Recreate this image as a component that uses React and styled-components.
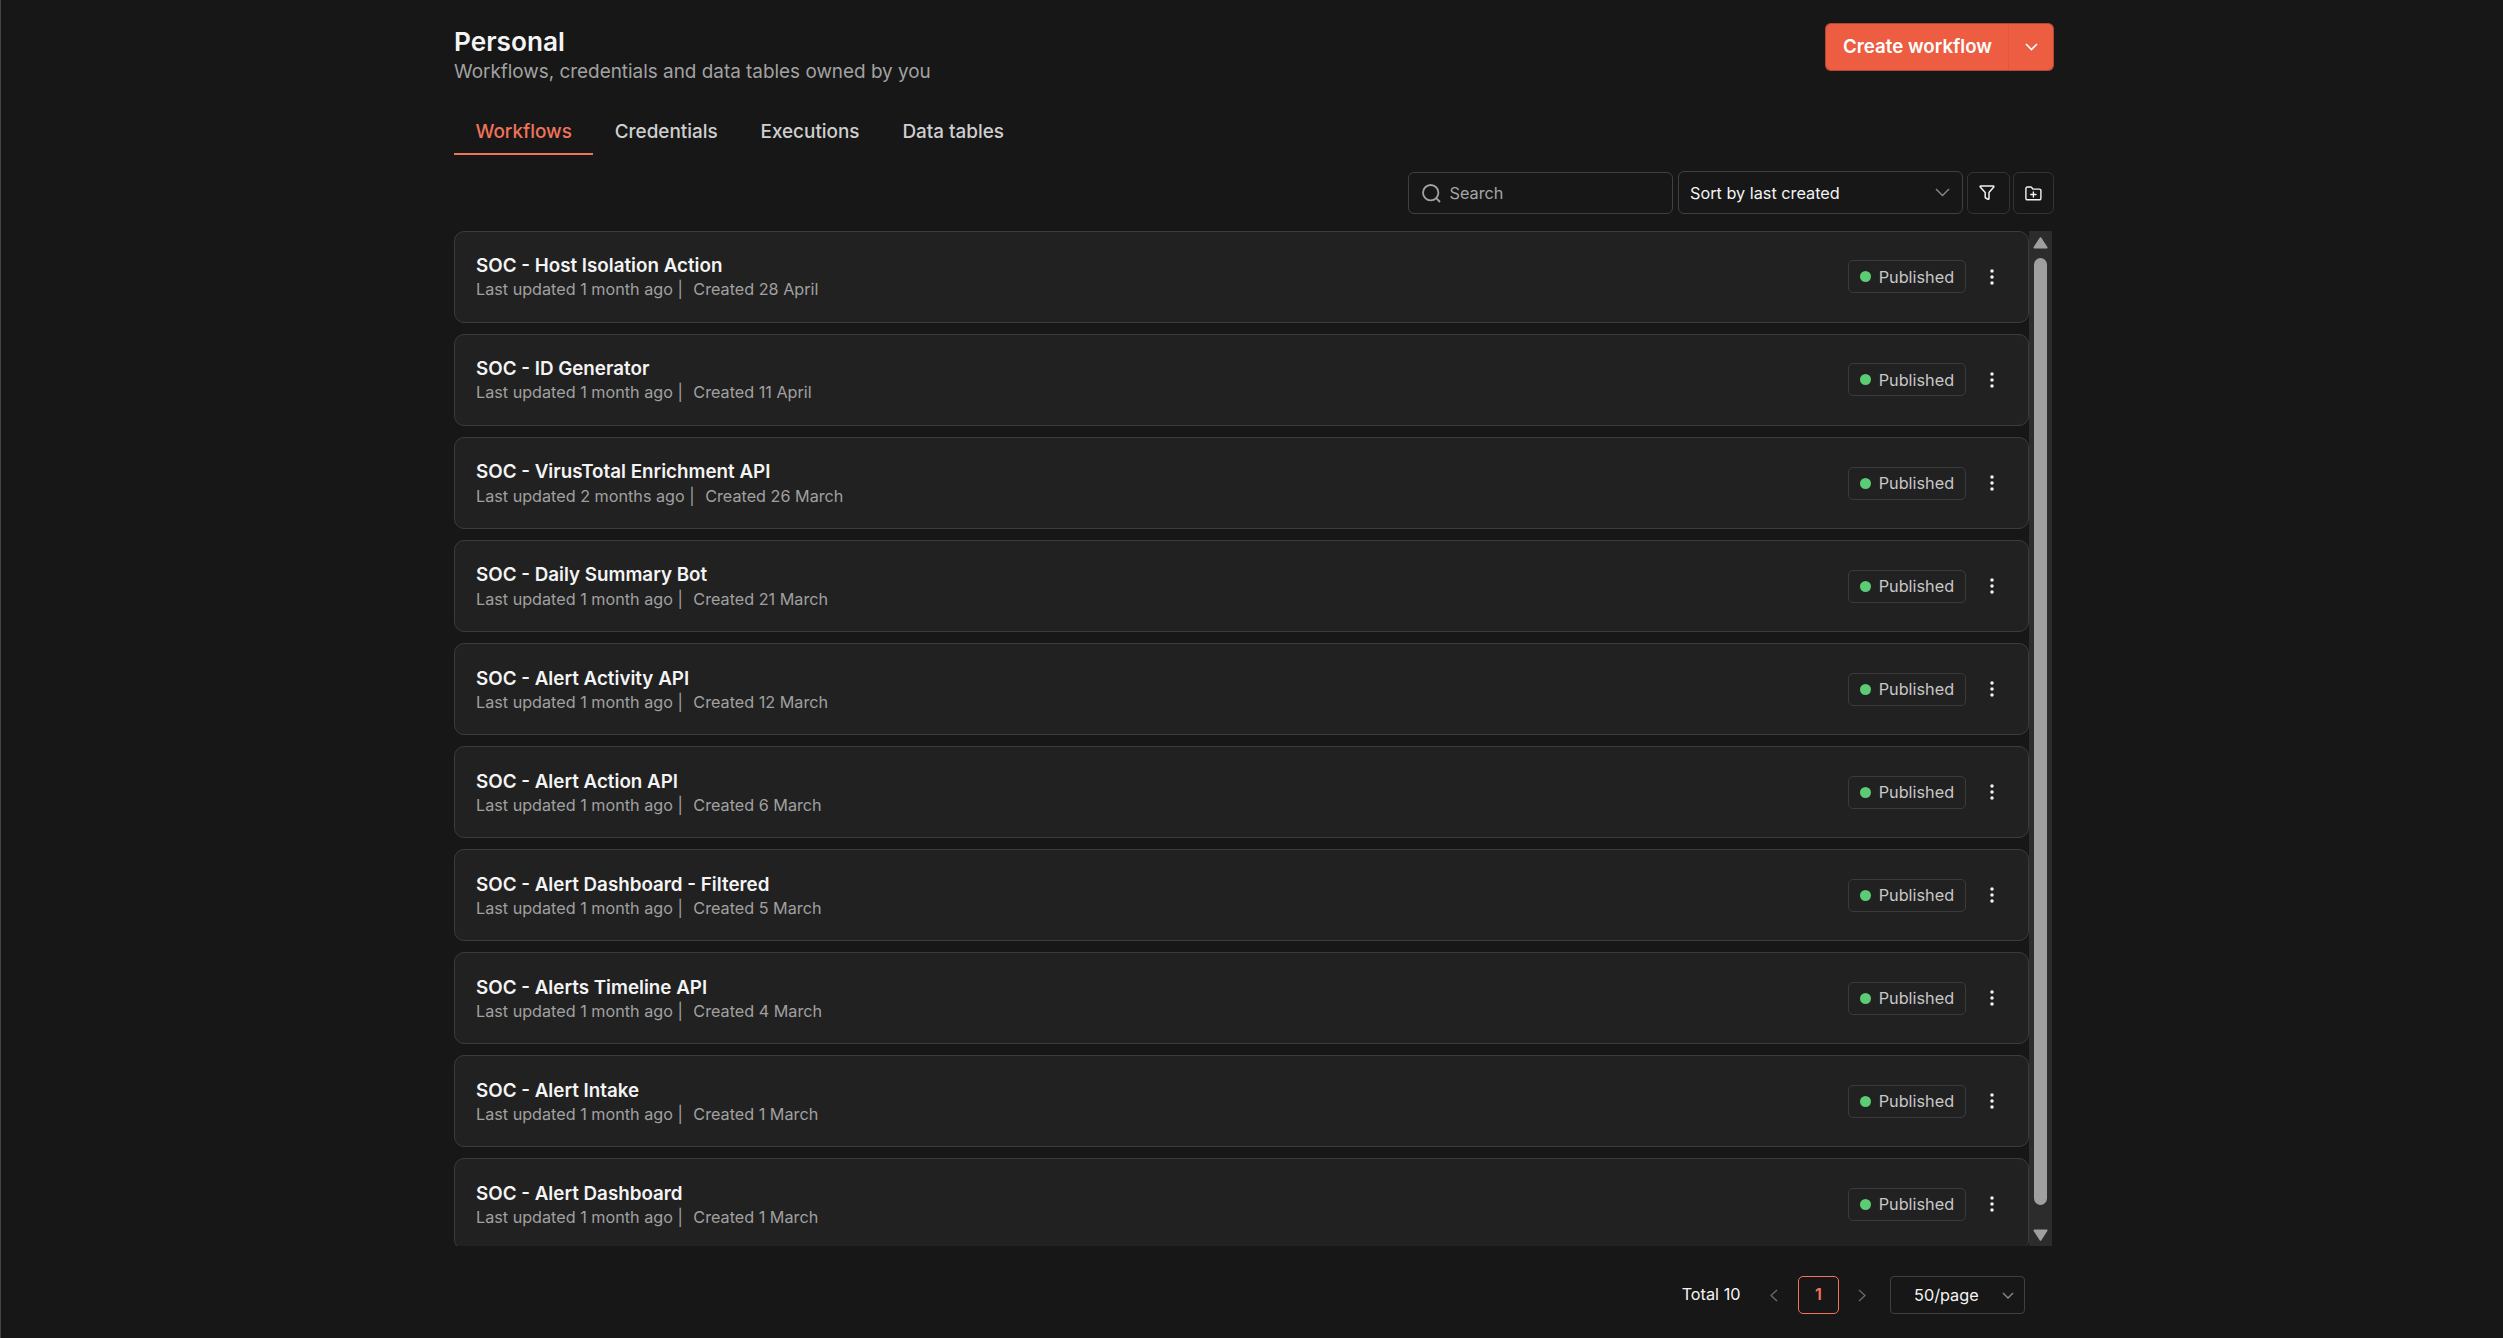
import React from "react";
import styled, { createGlobalStyle } from "styled-components";

const workflows = [
  { name: "SOC - Host Isolation Action", updated: "1 month ago", created: "28 April" },
  { name: "SOC - ID Generator", updated: "1 month ago", created: "11 April" },
  { name: "SOC - VirusTotal Enrichment API", updated: "2 months ago", created: "26 March" },
  { name: "SOC - Daily Summary Bot", updated: "1 month ago", created: "21 March" },
  { name: "SOC - Alert Activity API", updated: "1 month ago", created: "12 March" },
  { name: "SOC - Alert Action API", updated: "1 month ago", created: "6 March" },
  { name: "SOC - Alert Dashboard - Filtered", updated: "1 month ago", created: "5 March" },
  { name: "SOC - Alerts Timeline API", updated: "1 month ago", created: "4 March" },
  { name: "SOC - Alert Intake", updated: "1 month ago", created: "1 March" },
  { name: "SOC - Alert Dashboard", updated: "1 month ago", created: "1 March" },
];

const tabs = ["Workflows", "Credentials", "Executions", "Data tables"];

const Chevron = ({ width, height, color, stroke = 1.3 }) => (
  <Icon width={width} height={height} viewBox={`0 0 ${width} ${height}`}>
    <path
      d={`M1 1 L${width / 2} ${height - 1} L${width - 1} 1`}
      stroke={color}
      strokeWidth={stroke}
    />
  </Icon>
);

const SideChevron = ({ right }) => (
  <Icon width="8" height="13" viewBox="0 0 8 13">
    <path d={right ? "M1 1 L7 6.5 L1 12" : "M7 1 L1 6.5 L7 12"} stroke="#6e6e6e" strokeWidth="1.2" />
  </Icon>
);

const WorkflowCard = ({ name, updated, created }) => (
  <Card>
    <div>
      <CardTitle>{name}</CardTitle>
      <CardInfo>
        <span>Last updated {updated} |</span>
        <span>Created {created}</span>
      </CardInfo>
    </div>
    <CardActions>
      <Badge>
        <Dot />
        Published
      </Badge>
      <Icon width="4" height="16" viewBox="0 0 4 16">
        <g fill="#f2f2f2">
          <circle cx="2" cy="2" r="1.75" />
          <circle cx="2" cy="8" r="1.75" />
          <circle cx="2" cy="14" r="1.75" />
        </g>
      </Icon>
    </CardActions>
  </Card>
);

const App = () => {
  return (
    <Page>
      <GlobalStyle />

      <Header>
        <div>
          <Title>Personal</Title>
          <Subtitle>Workflows, credentials and data tables owned by you</Subtitle>
        </div>
        <CreateGroup>
          <CreateButton>Create workflow</CreateButton>
          <CreateToggle>
            <Chevron width={13} height={7.5} color="#fff" stroke={1.6} />
          </CreateToggle>
        </CreateGroup>
      </Header>

      <Tabs>
        {tabs.map((tab, i) => (
          <Tab key={tab} $active={i === 0}>
            {tab}
          </Tab>
        ))}
      </Tabs>

      <Toolbar>
        <SearchBox>
          <Icon width="19" height="19" viewBox="0 0 19 19">
            <circle cx="8.7" cy="8.7" r="7.7" stroke="#a3a3a3" strokeWidth="1.8" />
            <path d="M14.2 14.2 L18 18" stroke="#a3a3a3" strokeWidth="1.8" />
          </Icon>
          <span>Search</span>
        </SearchBox>
        <SortSelect>
          <span>Sort by last created</span>
          <Chevron width={15} height={8.5} color="#8c8c8c" />
        </SortSelect>
        <IconButton $width={43}>
          <Icon width="16" height="16" viewBox="0 0 16 16">
            <path
              d="M1.7 1 H14.3 a.6 .6 0 0 1 .45 1 L10 7.4 V13.6 a.7 .7 0 0 1 -1 .65 L6.7 13 A.8 .8 0 0 1 6.2 12.2 V7.4 L1.25 2 a.6 .6 0 0 1 .45 -1 Z"
              stroke="#f2f2f2"
              strokeWidth="1.5"
              strokeLinejoin="round"
            />
          </Icon>
        </IconButton>
        <IconButton $width={41}>
          <Icon width="17" height="15" viewBox="0 0 17 15">
            <path
              d="M2.3 1 H5.6 a1.4 1.4 0 0 1 1.2 .6 L7.4 2.5 a1.4 1.4 0 0 0 1.2 .6 H14.5 A1.4 1.4 0 0 1 15.9 4.5 V12.4 A1.4 1.4 0 0 1 14.5 13.8 H2.3 A1.4 1.4 0 0 1 .9 12.4 V2.4 A1.4 1.4 0 0 1 2.3 1 Z M8.4 5.9 V11 M5.8 8.45 H11"
              stroke="#f2f2f2"
              strokeWidth="1.4"
              strokeLinecap="round"
              strokeLinejoin="round"
            />
          </Icon>
        </IconButton>
      </Toolbar>

      <ListArea>
        <List>
          {workflows.map((workflow) => (
            <WorkflowCard key={workflow.name} {...workflow} />
          ))}
        </List>
        <Scrollbar>
          <Icon width="15" height="12" viewBox="0 0 15 12">
            <path d="M7.5 1.2 L13.5 10.6 H1.5 Z" fill="#9f9f9f" stroke="#9f9f9f" strokeWidth="2" strokeLinejoin="round" />
          </Icon>
          <Thumb />
          <Icon width="15" height="12" viewBox="0 0 15 12">
            <path d="M7.5 10.8 L13.5 1.4 H1.5 Z" fill="#9f9f9f" stroke="#9f9f9f" strokeWidth="2" strokeLinejoin="round" />
          </Icon>
        </Scrollbar>
      </ListArea>

      <Pagination>
        <Total>Total 10</Total>
        <SideChevron />
        <PageNumber>1</PageNumber>
        <SideChevron right />
        <PageSize>
          <span>50/page</span>
          <Chevron width={12} height={7} color="#8c8c8c" />
        </PageSize>
      </Pagination>
    </Page>
  );
};

export default App;

const GlobalStyle = createGlobalStyle`
  body {
    margin: 0;
    background-color: #171717;
    font-family: Inter, "Open Sans", sans-serif;
    font-size: 16.25px;
    color: #f4f4f4;
  }
`;

const Icon = styled.svg`
  display: block;
  flex-shrink: 0;
  fill: none;
`;

const Page = styled.div`
  height: 1338px;
  padding: 23px 449px 0 453px;
  border-left: 1px solid #444;
  box-sizing: border-box;
  overflow: hidden;
`;

const Header = styled.div`
  display: flex;
  justify-content: space-between;
  align-items: flex-start;
  height: 87px;
`;

const Title = styled.h1`
  margin: 4px 0 0;
  font-size: 26.2px;
  font-weight: 600;
  line-height: 30px;
`;

const Subtitle = styled.p`
  margin: 3px 0 0;
  font-size: 18.9px;
  line-height: 24px;
  color: #a2a2a2;
`;

const CreateGroup = styled.div`
  display: flex;
  height: 48px;
  color: #fff;
`;

const CreateButton = styled.div`
  width: 183px;
  padding-left: 17px;
  box-sizing: border-box;
  border: 1px solid #b24937;
  border-right: none;
  border-radius: 6px 0 0 6px;
  background-color: #ec5d41;
  font-size: 18.7px;
  font-weight: 600;
  line-height: 45px;
`;

const CreateToggle = styled.div`
  display: flex;
  align-items: center;
  justify-content: center;
  width: 46px;
  box-sizing: border-box;
  border: 1px solid #b24937;
  border-left-color: #df583e;
  border-radius: 0 6px 6px 0;
  background-color: #ec5d41;
`;

const Tabs = styled.div`
  display: flex;
`;

const Tab = styled.div`
  height: 45px;
  padding: 10px 21.45px 0;
  box-sizing: border-box;
  border-bottom: 2px solid ${(p) => (p.$active ? "#f0735c" : "transparent")};
  font-size: 18.9px;
  font-weight: 500;
  line-height: 24px;
  color: ${(p) => (p.$active ? "#f0735c" : "#cfcfcf")};
`;

const Toolbar = styled.div`
  display: flex;
  justify-content: flex-end;
  align-items: flex-end;
  height: 43px;
  margin-top: 16px;
`;

const SearchBox = styled.div`
  display: flex;
  align-items: center;
  gap: 9px;
  width: 265px;
  height: 42px;
  padding-left: 12.5px;
  box-sizing: border-box;
  border: 1px solid #404040;
  border-radius: 6px;
  color: #a6a6a6;
`;

const SortSelect = styled.div`
  display: flex;
  align-items: center;
  justify-content: space-between;
  width: 285px;
  height: 43px;
  margin: 0 4px 0 5px;
  padding: 0 12px 0 11px;
  box-sizing: border-box;
  border: 1px solid #404040;
  border-radius: 6px;
`;

const IconButton = styled.div`
  display: flex;
  align-items: center;
  justify-content: center;
  width: ${(p) => p.$width}px;
  height: 42px;
  padding-right: 3px;
  box-sizing: border-box;
  border: 1px solid #333;
  border-radius: 6px;

  & + & {
    margin-left: 3px;
    padding-right: 0;
  }
`;

const ListArea = styled.div`
  display: flex;
  width: 1598px;
  height: 1015px;
  margin-top: 17px;
`;

const List = styled.div`
  display: flex;
  flex-direction: column;
  gap: 11px;
  flex: 1;
  overflow: hidden;
`;

const Card = styled.div`
  display: flex;
  justify-content: space-between;
  flex-shrink: 0;
  height: 92.05px;
  padding: 22.33px 34.5px 0 21px;
  box-sizing: border-box;
  border: 1px solid #3b3b3b;
  border-radius: 10px;
  background-color: #212121;
`;

const CardTitle = styled.div`
  font-size: 18.8px;
  font-weight: 600;
  line-height: 24px;
`;

const CardInfo = styled.div`
  display: flex;
  gap: 10.5px;
  margin-top: 1.08px;
  font-size: 16.2px;
  line-height: 20px;
  color: #a0a0a0;
`;

const CardActions = styled.div`
  display: flex;
  align-items: center;
  gap: 23.5px;
  height: 33px;
  margin-top: 6.08px;
`;

const Badge = styled.div`
  display: flex;
  align-items: center;
  width: 118px;
  height: 33px;
  padding-left: 11px;
  box-sizing: border-box;
  border: 1px solid #3b3b3b;
  border-radius: 5px;
  color: #c8c8c8;
`;

const Dot = styled.span`
  width: 11px;
  height: 11px;
  margin-right: 7.7px;
  border-radius: 50%;
  background-color: #5bcb74;
`;

const Scrollbar = styled.div`
  display: flex;
  flex-direction: column;
  align-items: center;
  justify-content: space-between;
  width: 23px;
  padding: 6px 0 5px;
  box-sizing: border-box;
  background-color: #2c2c2c;
`;

const Thumb = styled.div`
  width: 13px;
  height: 947px;
  margin-bottom: 15px;
  border-radius: 7px;
  background-color: #9f9f9f;
`;

const Pagination = styled.div`
  display: flex;
  align-items: center;
  justify-content: flex-end;
  height: 38px;
  margin: 30px 29px 0 0;
`;

const Total = styled.span`
  margin-right: 29.5px;
  padding-bottom: 2px;
`;

const PageNumber = styled.div`
  width: 41px;
  height: 38px;
  margin: 0 19px 0 20px;
  box-sizing: border-box;
  border: 1px solid #f0735c;
  border-radius: 5px;
  font-weight: 600;
  line-height: 34px;
  text-align: center;
  color: #f0735c;
`;

const PageSize = styled.div`
  display: flex;
  align-items: center;
  justify-content: space-between;
  width: 135px;
  height: 38px;
  margin-left: 24px;
  padding: 0 10px 0 23px;
  box-sizing: border-box;
  border: 1px solid #404040;
  border-radius: 4px;
`;
